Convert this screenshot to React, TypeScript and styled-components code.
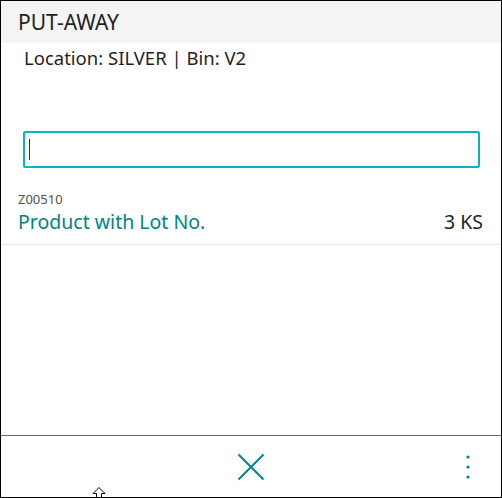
import styled, { createGlobalStyle } from 'styled-components';

const GlobalStyle = createGlobalStyle`
  html, body {
    margin: 0;
    padding: 0;
    background: #ffffff;
  }
  body {
    font-family: 'Noto Sans', 'Open Sans', sans-serif;
    color: #212121;
  }
`;

const Frame = styled.div`
  box-sizing: border-box;
  width: 502px;
  height: 498px;
  border: 1px solid #000000;
  display: flex;
  flex-direction: column;
  position: relative;
  overflow: hidden;
`;

const Header = styled.header`
  height: 42px;
  background: #f4f4f5;
  display: flex;
  align-items: center;
  padding-left: 17px;
  font-size: 21px;
  color: #1f1f1f;
`;

const Subtitle = styled.div`
  padding: 3px 0 0 23px;
  font-size: 18.5px;
  line-height: 24px;
  color: #1f1f1f;
`;

const Body = styled.main`
  flex: 1;
  display: flex;
  flex-direction: column;
`;

const Field = styled.label`
  box-sizing: border-box;
  margin: 61px 21px 0 22px;
  height: 37px;
  border: 2px solid #00b7c3;
  border-radius: 2px;
  display: flex;
  align-items: center;
  padding: 0 4px;
`;

const Caret = styled.span`
  width: 1px;
  height: 21px;
  background: #333333;
  flex-shrink: 0;
`;

const ScanInput = styled.input`
  flex: 1;
  min-width: 0;
  border: none;
  outline: none;
  background: transparent;
  padding: 0;
  font-size: 17px;
  font-family: inherit;
  caret-color: transparent;
`;

const Line = styled.section`
  margin-top: 22px;
  padding: 0 18px 8px 17px;
  border-bottom: 1px solid #e6e6e6;
`;

const ItemNo = styled.div`
  font-size: 13px;
  line-height: 18px;
  color: #505050;
`;

const LineRow = styled.div`
  display: flex;
  justify-content: space-between;
  align-items: baseline;
  font-size: 19.5px;
  line-height: 28px;
`;

const Description = styled.span`
  color: #00838b;
`;

const Quantity = styled.span`
  color: #1f1f1f;
`;

const Footer = styled.footer`
  height: 61px;
  border-top: 1px solid #6b6b6b;
  display: grid;
  grid-template-columns: 1fr auto 1fr;
  align-items: center;
`;

const IconButton = styled.button<{ $align?: 'end' }>`
  background: none;
  border: none;
  padding: 0;
  cursor: pointer;
  justify-self: ${(p) => (p.$align === 'end' ? 'end' : 'center')};
  margin-right: ${(p) => (p.$align === 'end' ? '30px' : '0')};
  display: flex;
  align-items: center;
  justify-content: center;
`;

const Cursor = styled.svg`
  position: absolute;
  left: 91px;
  top: 486px;
`;

export default function App() {
  return (
    <>
      <GlobalStyle />
      <Frame>
        <Header>PUT-AWAY</Header>
        <Subtitle>Location: SILVER | Bin: V2</Subtitle>
        <Body>
          <Field>
            <Caret />
            <ScanInput />
          </Field>
          <Line>
            <ItemNo>Z00510</ItemNo>
            <LineRow>
              <Description>Product with Lot No.</Description>
              <Quantity>3 KS</Quantity>
            </LineRow>
          </Line>
        </Body>
        <Footer>
          <span />
          <IconButton aria-label="Close">
            <svg width="30" height="30" viewBox="0 0 30 30">
              <path d="M2.5 2.5 L27.5 27.5 M27.5 2.5 L2.5 27.5" stroke="#00838b" strokeWidth="2" fill="none" />
            </svg>
          </IconButton>
          <IconButton $align="end" aria-label="More">
            <svg width="6" height="26" viewBox="0 0 6 26">
              <circle cx="3" cy="3" r="1.6" fill="#00838b" />
              <circle cx="3" cy="13" r="1.6" fill="#00838b" />
              <circle cx="3" cy="23" r="1.6" fill="#00838b" />
            </svg>
          </IconButton>
        </Footer>
        <Cursor width="14" height="12" viewBox="0 0 14 12">
          <path d="M7 0.5 L13 6.5 L9.5 6.5 L9.5 11.5 L4.5 11.5 L4.5 6.5 L1 6.5 Z" fill="#ffffff" stroke="#000000" strokeWidth="1" />
        </Cursor>
      </Frame>
    </>
  );
}
